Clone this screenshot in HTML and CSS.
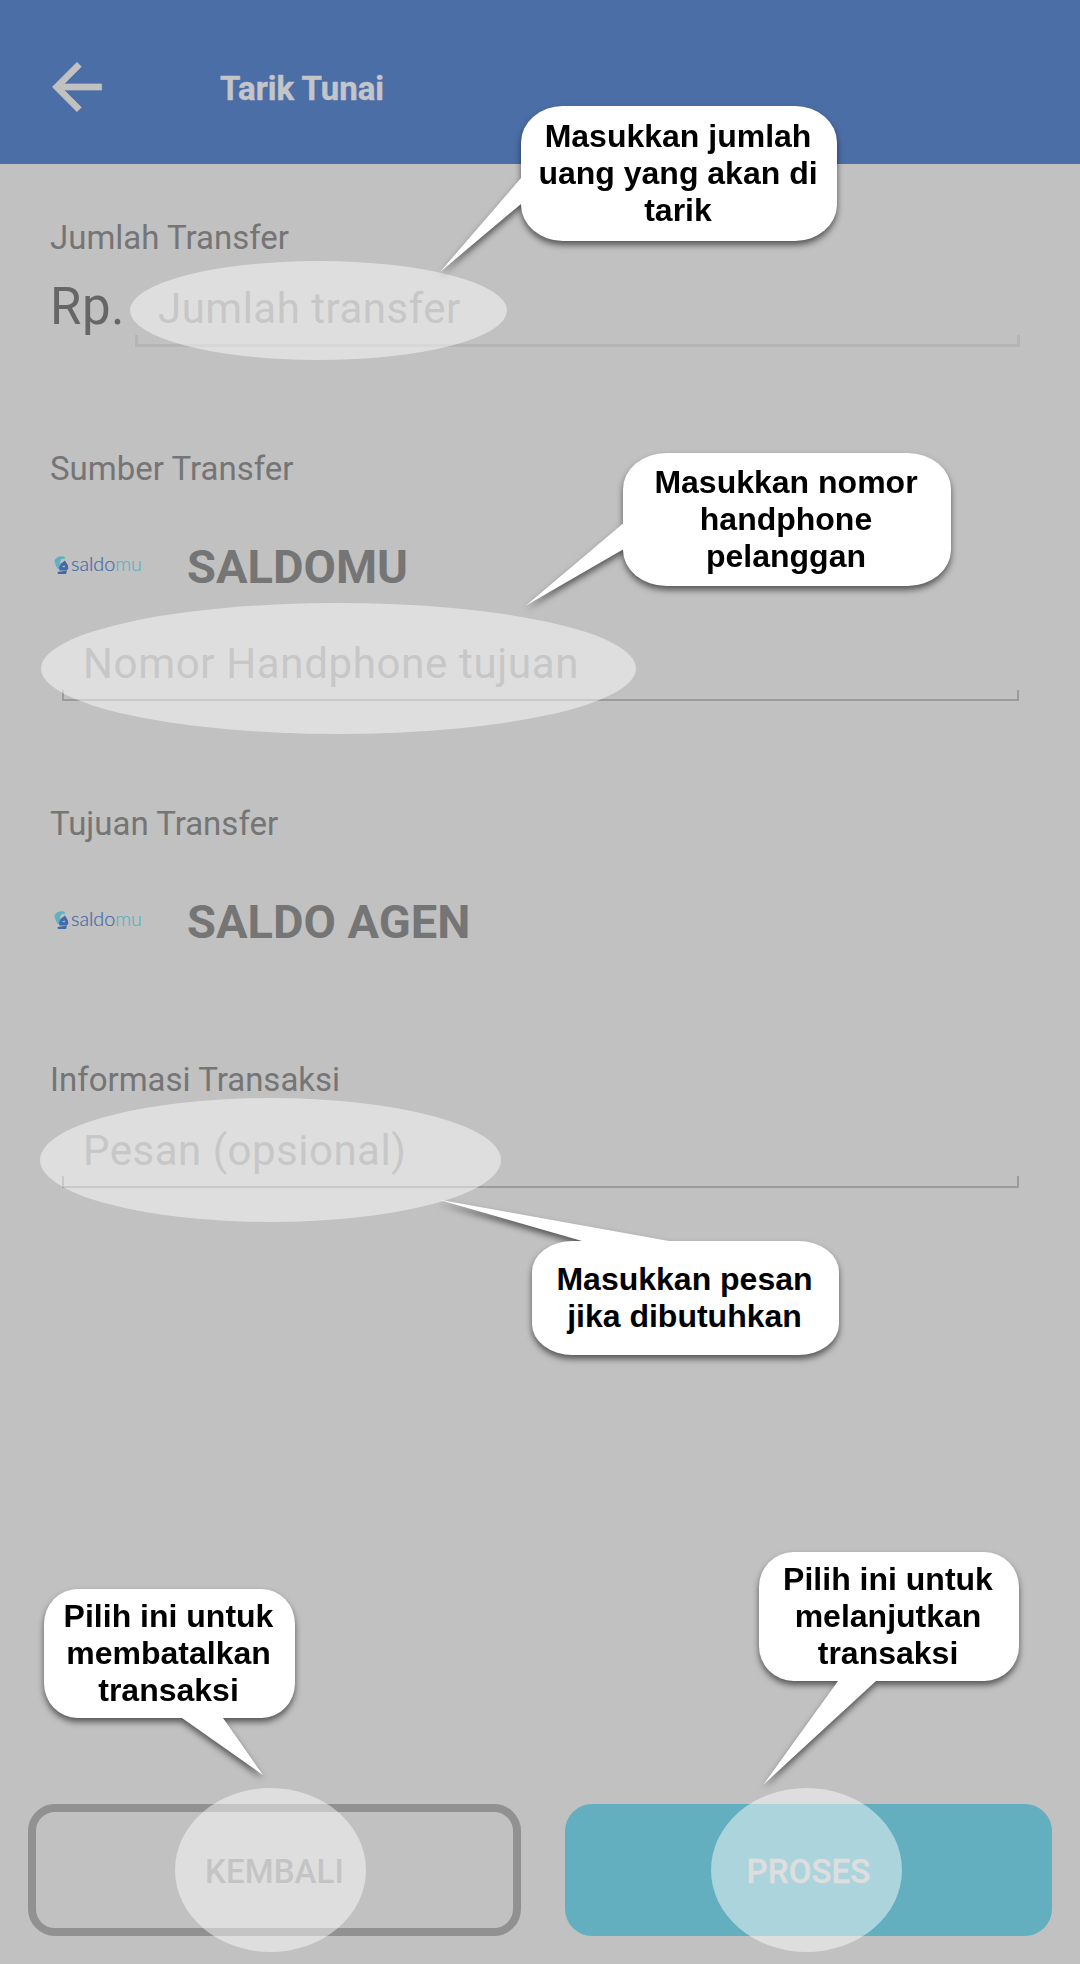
FILE: index.html
```html
<!DOCTYPE html>
<html lang="id">
<head>
<meta charset="utf-8">
<title>Tarik Tunai</title>
<link rel="stylesheet" href="styles.css">
</head>
<body>
<div class="screen">
  <header class="topbar">
    <svg class="back" viewBox="0 0 24 24"><path d="M20 11H7.83l5.590-5.590L12 4l-8 8 8 8 1.410-1.410L7.830 13H20v-2z"/></svg>
    <h1 class="title">Tarik Tunai</h1>
  </header>

  <main class="form">
    <section class="group amount">
      <h2 class="label">Jumlah Transfer</h2>
      <div class="amount-row">
        <span class="currency">Rp.</span>
        <div class="field field-amount"><span class="hint">Jumlah transfer</span><div class="bracket"></div></div>
      </div>
    </section>
    <section class="group source">
      <h2 class="label">Sumber Transfer</h2>
      <div class="account">
        <svg class="logo" viewBox="0 0 90 26">
          <path class="logo-teal" d="M1.500 8 4.500 5.200Q8 3.500 11 4.500l1.500 2-4 .5-1.500 3 1 4-2.500 3.500Q2 14 1.500 8z"/>
          <path class="logo-blue" d="M6 15.500 8 11.500l4-3 3 5 .3 3.500-2 1.500H6.500zM8.800 14.500l2.500 1 1-2z" fill-rule="evenodd"/>
          <path class="logo-blue" d="M4.500 20 14 18.500l-1 3.500H5z"/>
          <text class="logo-text" x="18" y="19.300" textLength="71" lengthAdjust="spacingAndGlyphs">saldo<tspan class="logo-teal">mu</tspan></text>
        </svg>
        <strong class="account-name">SALDOMU</strong>
      </div>
      <div class="field"><span class="hint">Nomor Handphone tujuan</span><div class="bracket"></div></div>
    </section>
    <section class="group target">
      <h2 class="label">Tujuan Transfer</h2>
      <div class="account">
        <svg class="logo" viewBox="0 0 90 26">
          <path class="logo-teal" d="M1.500 8 4.500 5.200Q8 3.500 11 4.500l1.500 2-4 .5-1.500 3 1 4-2.500 3.500Q2 14 1.500 8z"/>
          <path class="logo-blue" d="M6 15.500 8 11.500l4-3 3 5 .3 3.500-2 1.500H6.500zM8.800 14.500l2.500 1 1-2z" fill-rule="evenodd"/>
          <path class="logo-blue" d="M4.500 20 14 18.500l-1 3.500H5z"/>
          <text class="logo-text" x="18" y="19.300" textLength="71" lengthAdjust="spacingAndGlyphs">saldo<tspan class="logo-teal">mu</tspan></text>
        </svg>
        <strong class="account-name">SALDO AGEN</strong>
      </div>
    </section>
    <section class="group info">
      <h2 class="label">Informasi Transaksi</h2>
      <div class="field"><span class="hint">Pesan (opsional)</span><div class="bracket"></div></div>
    </section>
  </main>

  <footer class="actions">
    <button class="btn btn-back">KEMBALI</button>
    <button class="btn btn-next">PROSES</button>
  </footer>

  <div class="spot spot-amount"></div>
  <div class="spot spot-phone"></div>
  <div class="spot spot-message"></div>
  <div class="spot spot-back"></div>
  <div class="spot spot-next"></div>

  <div class="callout callout-amount">
    <svg class="tail" viewBox="0 0 1 1"><path d="M4 72 0 72-81 166 0 98H4z"/></svg>
    <p class="bubble">Masukkan jumlah<br>uang yang akan di<br>tarik</p>
  </div>
  <div class="callout callout-phone">
    <svg class="tail" viewBox="0 0 1 1"><path d="M4 70.500H0L-97 152.500 0 96.500H4z"/></svg>
    <p class="bubble">Masukkan nomor<br>handphone<br>pelanggan</p>
  </div>
  <div class="callout callout-message">
    <svg class="tail" viewBox="0 0 1 1"><path d="M50 4V0L-94-41.500 137 0V4z"/></svg>
    <p class="bubble">Masukkan pesan<br>jika dibutuhkan</p>
  </div>
  <div class="callout callout-back">
    <svg class="tail" viewBox="0 0 1 1"><path d="M138 125V129L219 186 179 129V125z"/></svg>
    <p class="bubble">Pilih ini untuk<br>membatalkan<br>transaksi</p>
  </div>
  <div class="callout callout-next">
    <svg class="tail" viewBox="0 0 1 1"><path d="M79 125V129L4.500 232.500 117 129V125z"/></svg>
    <p class="bubble">Pilih ini untuk<br>melanjutkan<br>transaksi</p>
  </div>
</div>
</body>
</html>
```
FILE: styles.css
```css
* { box-sizing: border-box; }

body {
  margin: 0;
  background: #c1c1c1;
  font-family: Roboto, "Liberation Sans", sans-serif;
}

h1, h2, p { margin: 0; font-weight: 400; }

.screen {
  position: relative;
  display: flex;
  flex-direction: column;
  width: 1080px;
  height: 1964px;
  overflow: hidden;
}

.topbar {
  display: flex;
  align-items: center;
  flex: none;
  height: 164px;
  padding: 10px 40px 0;
  gap: 106px;
  background: #4c6ea6;
}
.back { width: 74px; height: 74px; fill: #c1c1c1; stroke: #c1c1c1; stroke-width: .2; }
.title { font-size: 33px; font-weight: 700; line-height: 40px; padding-top: 3px; color: #c3c5c8; -webkit-text-stroke: .4px #c3c5c8; }

.form { flex: 1; padding: 54px 60px 0 50px; }
.label { font-size: 33px; line-height: 40px; color: #757575; }
.source { margin-top: 102px; }
.target { margin-top: 103px; }
.info { margin-top: 110px; }

.amount-row { display: flex; margin-top: 19px; }
.currency { width: 85px; font-size: 51px; line-height: 60px; letter-spacing: .5px; color: #666; }

.field {
  display: flex;
  flex-direction: column;
  justify-content: space-between;
  height: 62px;
  margin: 44px 1px 0 12px;
}
.field-amount { flex: 1; height: 70px; margin: 0; padding-top: 7px; }
.hint { font-size: 42px; line-height: 50px; letter-spacing: .65px; padding-left: 21px; color: #979797; white-space: nowrap; }
.field-amount .hint { padding-left: 23px; letter-spacing: .5px; }
.bracket { height: 11px; margin-top: -10px; border: solid #9b9b9b; border-width: 0 2px 2px; }
.field-amount .bracket { height: 12px; border-color: #b5b5b5; border-width: 0 3px 3px; }
.info .field { height: 62px; margin-top: 26px; }
.info .hint { letter-spacing: .5px; }
.info .bracket { height: 12px; }

.account { display: flex; align-items: center; height: 56px; margin-top: 50px; }
.logo { width: 90px; height: 26px; margin: 0 0 5px 3px; overflow: visible; }
.account-name { margin-left: 44px; font-size: 47px; line-height: 56px; color: #757575; }
.logo-teal { fill: #5cb2c0; }
.logo-blue { fill: #4469aa; }
.logo-text { font: 300 19px Lato, sans-serif; fill: #4469aa; stroke: #4469aa; stroke-width: .2; }
.logo-text .logo-teal { fill: #5cb2c0; stroke: #5cb2c0; }

.actions { display: flex; gap: 44px; padding: 0 28px 28px; }
.btn {
  height: 132px;
  padding: 3px 0 0;
  border: 0;
  border-radius: 27px;
  font: 500 33px/40px Roboto, sans-serif;
  letter-spacing: .1px;
}
.btn-back { width: 493px; border: 8px solid #919191; background: none; color: #919191; }
.btn-next { width: 487px; background: #63afbf; color: #c1c1c1; -webkit-text-stroke: .4px #c1c1c1; }

/* highlights and callouts float above the form */
.spot { position: absolute; border-radius: 50%; background: rgba(255, 255, 255, .468); }
.spot-amount { left: 130px; top: 261px; width: 377px; height: 99px; }
.spot-phone { left: 41px; top: 603px; width: 595px; height: 131px; }
.spot-message { left: 40px; top: 1098px; width: 461px; height: 124px; }
.spot-back { left: 175px; top: 1788px; width: 191px; height: 164px; }
.spot-next { left: 711px; top: 1788px; width: 191px; height: 164px; }

.callout { position: absolute; filter: drop-shadow(0 4px 3px rgba(0, 0, 0, .55)); }
.tail { position: absolute; left: 0; top: 0; width: 1px; height: 1px; overflow: visible; fill: #fff; }
.bubble {
  height: 100%;
  padding: 12px 2px 0 0;
  border-radius: 13.3% / 27%;
  background: #fff;
  color: #000;
  font: 700 32px/37px "Liberation Sans", Arial, sans-serif;
  text-align: center;
  white-space: nowrap;
}
.callout-amount { left: 521px; top: 106px; width: 316px; height: 135px; }
.callout-phone { left: 623px; top: 453px; width: 328px; height: 133px; }
.callout-phone .bubble { padding-top: 11px; }
.callout-message { left: 532px; top: 1241px; width: 307px; height: 114px; }
.callout-message .bubble { padding-top: 20px; }
.callout-back { left: 44px; top: 1589px; width: 251px; height: 129px; }
.callout-next { left: 759px; top: 1552px; width: 260px; height: 129px; }
.callout-back .bubble, .callout-next .bubble { padding-top: 9px; }
```
